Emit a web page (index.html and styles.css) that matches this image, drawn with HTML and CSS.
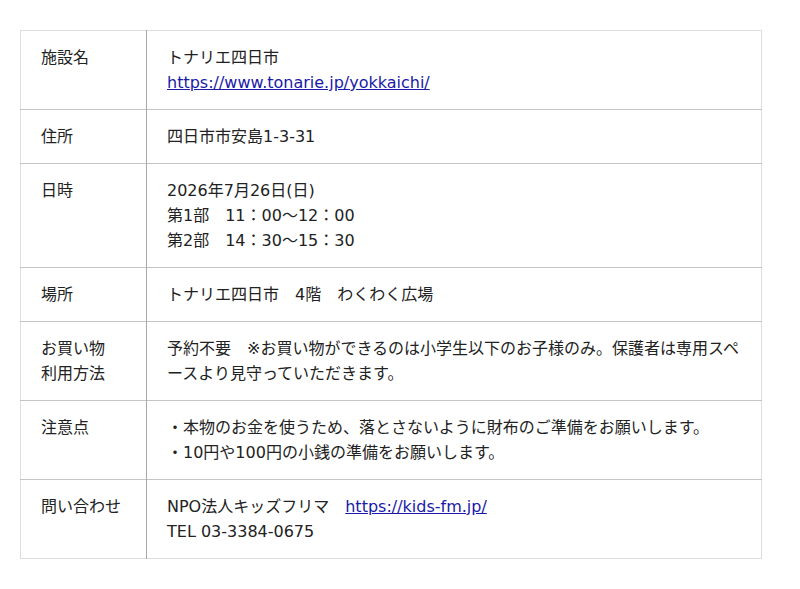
FILE: index.html
```html
<!DOCTYPE html>
<html lang="ja">
<head>
<meta charset="utf-8">
<link rel="stylesheet" href="styles.css">
</head>
<body>
<table class="info">
  <tr><th>施設名</th><td>トナリエ四日市<br><a href="#">https://www.tonarie.jp/yokkaichi/</a></td></tr>
  <tr><th>住所</th><td>四日市市安島1-3-31</td></tr>
  <tr><th>日時</th><td>2026年7月26日(日)<br>第1部　11：00～12：00<br>第2部　14：30～15：30</td></tr>
  <tr><th>場所</th><td>トナリエ四日市　4階　わくわく広場</td></tr>
  <tr><th>お買い物<br>利用方法</th><td>予約不要　※お買い物ができるのは小学生以下のお子様のみ。保護者は専用スペースより見守っていただきます。</td></tr>
  <tr><th>注意点</th><td>・本物のお金を使うため、落とさないように財布のご準備をお願いします。<br>・10円や100円の小銭の準備をお願いします。</td></tr>
  <tr><th>問い合わせ</th><td>NPO法人キッズフリマ　<a href="#">https://kids-fm.jp/</a><br>TEL 03-3384-0675</td></tr>
</table>
</body>
</html>
```
FILE: styles.css
```css
body {
  margin: 30px 20px;
  background: #fff;
  color: #222;
  font-family: "DejaVu Sans", "Noto Sans CJK JP", sans-serif;
  font-size: 16px;
  line-height: 25px;
}
.info {
  width: 742px;
  border-collapse: collapse;
  border: 1px solid #ddd;
}
.info th, .info td {
  text-align: left;
  vertical-align: top;
  font-weight: normal;
  padding: 14px 20px;
  border-top: 1px solid #c4c4c4;
}
.info tr:first-child th, .info tr:first-child td {
  border-top: 1px solid #ddd;
}
.info th {
  width: 85px;
  border-right: 1px solid #a8a8a8;
}
.info a {
  color: #1a1aa8;
}
```
